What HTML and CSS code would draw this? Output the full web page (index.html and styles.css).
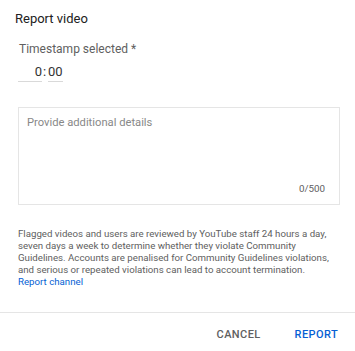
FILE: index.html
```html
<!DOCTYPE html>
<html lang="en">
<head>
  <meta charset="UTF-8">
  <title>Report video</title>
  <link rel="stylesheet" href="styles.css">
</head>
<body>
  <div class="dialog">
    <div class="content">
      <h2 class="title">Report video</h2>
      <div class="label">Timestamp selected *</div>
      <div class="time">
        <span class="field hours">0</span>
        <span class="colon">:</span>
        <span class="field minutes">00</span>
      </div>
      <div class="details">
        <div class="placeholder">Provide additional details</div>
        <div class="counter">0/500</div>
      </div>
      <p class="notice">
        Flagged videos and users are reviewed by YouTube staff 24 hours a day, seven days a week to determine whether they violate Community Guidelines. Accounts are penalised for Community Guidelines violations, and serious or repeated violations can lead to account termination.
        <br><a href="#" class="link">Report channel</a>
      </p>
    </div>
    <div class="footer">
      <button class="btn cancel">CANCEL</button>
      <button class="btn report">REPORT</button>
    </div>
  </div>
</body>
</html>
```

FILE: styles.css
```css
body { margin: 0; background: white; font-family: Roboto, "Noto Sans", sans-serif; }
.dialog { width: 355px; height: 351px; display: flex; flex-direction: column; }
.content { padding: 0 15px 0 18px; }
.title { margin: 0 0 0 -3px; padding-top: 9px; font-size: 13px; line-height: 20px; font-weight: 400; color: #212121; }
.label { margin-top: 12px; padding-left: 1px; font-size: 12px; line-height: 16px; color: #606060; }
.time { margin-top: 6px; display: flex; align-items: flex-start; font-size: 13px; line-height: 18px; color: #333; }
.field { display: block; padding-bottom: 0; border-bottom: 1px solid #d9d9d9; }
.hours { width: 24px; text-align: right; }
.colon { width: 6px; padding-left: 1px; box-sizing: border-box; }
.minutes { width: 15px; }
.details { margin-top: 25px; height: 98px; box-sizing: border-box; border: 1px solid #e5e5e5; padding: 7px 14px 9px 8px; display: flex; flex-direction: column; justify-content: space-between; }
.placeholder { font-size: 11.2px; line-height: 16px; color: #888; }
.counter { align-self: flex-end; font-size: 9.8px; line-height: 12px; color: #606060; }
.notice { margin: 23px 0 0; font-size: 9.7px; line-height: 12px; color: #606060; }
.link { color: #065fd4; text-decoration: none; }
.footer { margin-top: auto; height: 39px; box-sizing: border-box; border-top: 1px solid #e5e5e5; display: flex; justify-content: flex-end; gap: 34px; padding: 14px 17px 0 0; }
.btn { border: 0; background: none; padding: 0; font-family: inherit; font-size: 11px; line-height: 16px; font-weight: 500; letter-spacing: 0.4px; height: 16px; }
.cancel { color: #606060; }
.report { color: #065fd4; }
```
